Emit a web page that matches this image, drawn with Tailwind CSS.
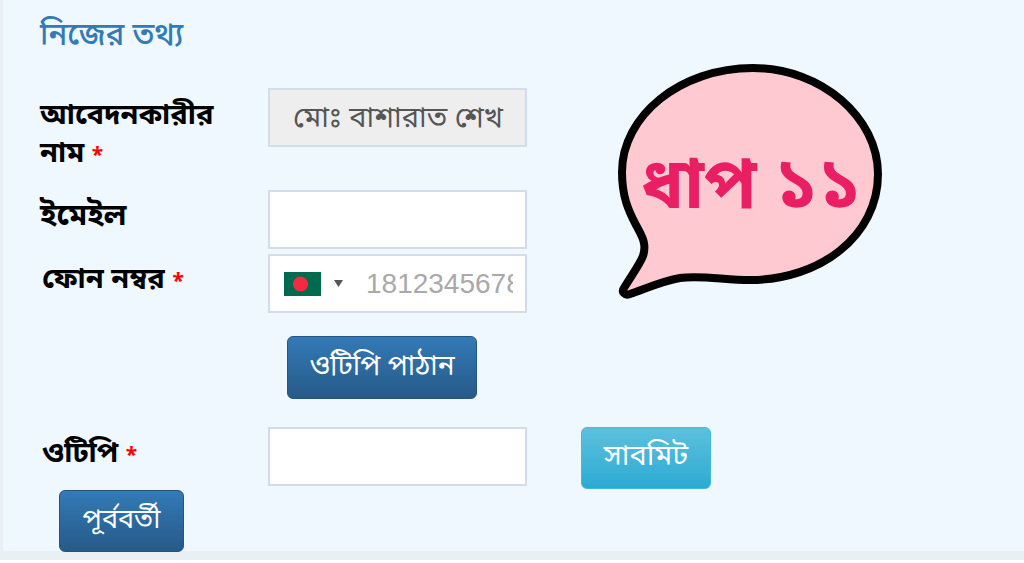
<!DOCTYPE html>
<html lang="bn">
<head>
<meta charset="UTF-8">
<script src="https://cdn.jsdelivr.net/npm/@tailwindcss/browser@4"></script>
<title>নিজের তথ্য</title>
</head>
<body class="bg-white font-['Noto_Sans_Bengali','Noto_Sans','Liberation_Sans',sans-serif]">
<main class="relative w-[1024px] h-[563px] overflow-hidden">
    <div class="h-[560px] bg-[#e8f0f4]">
        <div class="h-[551px] ml-[3px] bg-[#eff7ff] pl-[37px] pt-[20px]">
            <h2 class="h-[36px] text-[31px] leading-[36px] font-medium text-[#337ab7]">নিজের তথ্য</h2>

            <!-- name -->
            <div class="flex mt-[32px] h-[97px]">
                <label class="w-[228px] text-[29px] leading-[38px] font-bold text-black pt-[10px]">আবেদনকারীর<br>নাম <span class="text-[#f00] text-[21px]">*</span></label>
                <div class="w-[259px] h-[59px] border-2 border-[#d3dcea] bg-[#eeeeee] pl-[23px] text-[29px] leading-[60px] text-[#555] whitespace-nowrap">মোঃ বাশারাত শেখ</div>
            </div>

            <!-- email -->
            <div class="flex mt-[5px]">
                <label class="w-[228px] text-[30px] leading-[38px] font-bold text-black pt-[8px]">ইমেইল</label>
                <input type="text" class="w-[259px] h-[59px] border-2 border-[#d3dcea] bg-white">
            </div>

            <!-- phone -->
            <div class="flex mt-[5px]">
                <label class="w-[228px] text-[29px] leading-[38px] font-bold text-black pl-[2px] pt-[8px]">ফোন নম্বর <span class="text-[#f00] text-[21px]">*</span></label>
                <div class="w-[259px] h-[59px] border-2 border-[#d3dcea] bg-white flex items-center pl-[14px]">
                    <svg width="37" height="24" viewBox="0 0 37 24" class="shrink-0"><rect width="37" height="24" fill="#006a4e"/><circle cx="16.500" cy="12" r="7.600" fill="#f42a41"/></svg>
                    <svg width="9" height="7" viewBox="0 0 9 7" class="ml-[13px] shrink-0"><path d="M0 0h9L4.500 7z" fill="#555"/></svg>
                    <div class="ml-[23px] w-[147px] overflow-hidden text-[28px] leading-[30px] text-[#a9a9a9] font-['Liberation_Sans',sans-serif] whitespace-nowrap">1812345678</div>
                </div>
            </div>

            <div class="ml-[247px] mt-[23px]">
                <button class="w-[190px] h-[63px] rounded-[6px] bg-gradient-to-b from-[#337ab7] to-[#265a88] border border-[#245580] text-white text-[28px] leading-[54px]">ওটিপি পাঠান</button>
            </div>

            <!-- otp -->
            <div class="flex mt-[28px]">
                <label class="w-[228px] text-[29px] leading-[38px] font-bold text-black pl-[2px] pt-[9px]">ওটিপি <span class="text-[#f00] text-[21px]">*</span></label>
                <input type="text" class="w-[259px] h-[59px] border-2 border-[#d3dcea] bg-white">
                <button class="ml-[54px] w-[130px] h-[62px] rounded-[6px] bg-gradient-to-b from-[#5bc0de] to-[#2aabd2] border border-[#46b8da] text-white text-[29px] leading-[54px]">সাবমিট</button>
            </div>

            <button class="block ml-[19px] mt-[1px] w-[125px] h-[62px] rounded-[6px] bg-gradient-to-b from-[#337ab7] to-[#265a88] border border-[#245580] text-white text-[27px] leading-[54px]">পূর্ববর্তী</button>
        </div>
    </div>

    <!-- speech bubble over the form -->
    <svg class="absolute left-[600px] top-[50px]" width="300" height="260" viewBox="0 0 300 260">
        <path d="M153 18C222 18 278 68 278 124C278 186 220 230 150 230C125 230 100 225 80 228C62 231 45 239 30 244C25 246 21 242 24 238C30 228 40 214 43 206C47 194 42 186 36 175C28 160 22 146 22 122C22 66 80 18 153 18Z" fill="#ffc9d2" stroke="#000" stroke-width="8" stroke-linejoin="round"/>
    </svg>
    <div class="absolute left-[641px] top-[142px] text-[71px] leading-[96px] font-bold text-[#e91e63] whitespace-nowrap">ধাপ ১১</div>
</main>
</body>
</html>
